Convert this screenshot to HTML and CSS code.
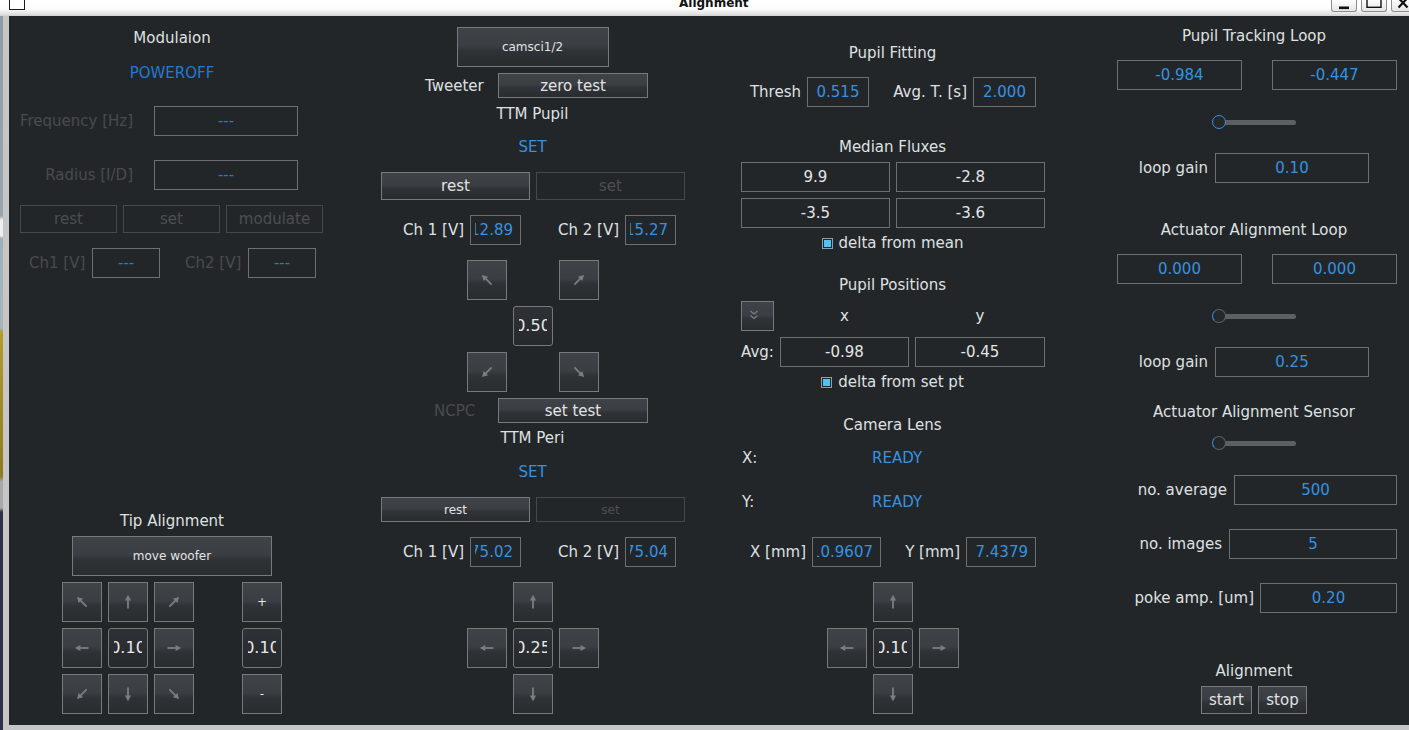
FILE: index.html
```html
<!DOCTYPE html>
<html>
<head>
<meta charset="utf-8">
<title>Alignment</title>
<link rel="stylesheet" href="styles.css">
</head>
<body>
<svg class="defs" aria-hidden="true">
  <defs>
    <g id="arr">
      <path d="M20 26.5V17.5" stroke="#7b7e81" stroke-width="1.8" fill="none"/>
      <path d="M16.9 18.4L20 12.8L23.1 18.4Z" fill="#7b7e81"/>
    </g>
  </defs>
</svg>

<div class="titlebar">
  <div class="tb-left"><div class="winicon"></div></div>
  <div class="tb-title">Alignment</div>
  <div class="tb-btns">
    <div class="wbtn"><svg viewBox="0 0 24 11"><rect x="7" y="6.5" width="10" height="2.6" fill="#111"/></svg></div>
    <div class="wbtn"><svg viewBox="0 0 24 11"><rect x="5" y="-3" width="14" height="10.3" fill="none" stroke="#111" stroke-width="1.4"/></svg></div>
    <div class="wbtn"><svg viewBox="0 0 24 11"><path d="M6.5 -2L15.5 7.5M15.5 -2L6.5 7.5" stroke="#111" stroke-width="2.2"/></svg></div>
  </div>
</div>

<div class="main">
  <div class="desk"></div>
  <div class="frame"></div>
  <div class="content">

    <!-- Column 1 -->
    <div class="col c1">
      <div class="ttl mt12">Modulaion</div>
      <div class="ttl pwr mt17">POWEROFF</div>
      <div class="row mt25">
        <span class="lbl dis lr w124">Frequency [Hz]</span>
        <span class="inp dimv w144 ml21">---</span>
      </div>
      <div class="row mt24">
        <span class="lbl dis lr w124">Radius [I/D]</span>
        <span class="inp dimv w144 ml21">---</span>
      </div>
      <div class="row h28 mt15 pl11 gap6">
        <span class="btn off w97 h28">rest</span>
        <span class="btn off w97 h28">set</span>
        <span class="btn off w97 h28">modulate</span>
      </div>
      <div class="row mt15 pl20">
        <span class="lbl dis lr w56">Ch1 [V]</span>
        <span class="inp dimv w68 ml7">---</span>
        <span class="lbl dis lr w56 ml25">Ch2 [V]</span>
        <span class="inp dimv w68 ml7">---</span>
      </div>

      <div class="ttl mt233">Tip Alignment</div>
      <div class="btn sm woofer mt7">move woofer</div>
      <div class="tip mt6">
        <div class="pad">
          <span class="btn sq"><svg viewBox="1 1 38 38"><use href="#arr" transform="rotate(-45 20 20)"/></svg></span>
          <span class="btn sq"><svg viewBox="1 1 38 38"><use href="#arr"/></svg></span>
          <span class="btn sq"><svg viewBox="1 1 38 38"><use href="#arr" transform="rotate(45 20 20)"/></svg></span>
          <span class="btn sq"><svg viewBox="1 1 38 38"><use href="#arr" transform="rotate(-90 20 20)"/></svg></span>
          <span class="spin"><span class="clipc"><span>0.10</span></span></span>
          <span class="btn sq"><svg viewBox="1 1 38 38"><use href="#arr" transform="rotate(90 20 20)"/></svg></span>
          <span class="btn sq"><svg viewBox="1 1 38 38"><use href="#arr" transform="rotate(-135 20 20)"/></svg></span>
          <span class="btn sq"><svg viewBox="1 1 38 38"><use href="#arr" transform="rotate(180 20 20)"/></svg></span>
          <span class="btn sq"><svg viewBox="1 1 38 38"><use href="#arr" transform="rotate(135 20 20)"/></svg></span>
        </div>
        <div class="pad1">
          <span class="btn sq sm">+</span>
          <span class="spin"><span class="clipc"><span>0.10</span></span></span>
          <span class="btn sq sm">-</span>
        </div>
      </div>
    </div>

    <!-- Column 2 -->
    <div class="col c2">
      <div class="btn sm camsci mt11">camsci1/2</div>
      <div class="row h25 mt6 pl90">
        <span class="lbl w73">Tweeter</span>
        <span class="btn w150 h25">zero test</span>
      </div>
      <div class="ttl mt6">TTM Pupil</div>
      <div class="ttl blue mt15">SET</div>
      <div class="row h28 mt17 pl46 gap6">
        <span class="btn w149 h28">rest</span>
        <span class="btn off w149 h28">set</span>
      </div>
      <div class="row mt15 pl68">
        <span class="lbl lr w60">Ch 1 [V]</span>
        <span class="inp rt w51 ml7"><span class="clipr"><span>12.89</span></span></span>
        <span class="lbl lr w60 ml37">Ch 2 [V]</span>
        <span class="inp rt w51 ml7"><span class="clipr"><span>15.27</span></span></span>
      </div>
      <div class="pad mt15 pl132">
        <span class="btn sq"><svg viewBox="1 1 38 38"><use href="#arr" transform="rotate(-45 20 20)"/></svg></span>
        <span></span>
        <span class="btn sq"><svg viewBox="1 1 38 38"><use href="#arr" transform="rotate(45 20 20)"/></svg></span>
        <span></span>
        <span class="spin"><span class="clipc"><span>0.50</span></span></span>
        <span></span>
        <span class="btn sq"><svg viewBox="1 1 38 38"><use href="#arr" transform="rotate(-135 20 20)"/></svg></span>
        <span></span>
        <span class="btn sq"><svg viewBox="1 1 38 38"><use href="#arr" transform="rotate(135 20 20)"/></svg></span>
      </div>
      <div class="row h25 mt6 pl99">
        <span class="lbl dis w64">NCPC</span>
        <span class="btn w150 h25">set test</span>
      </div>
      <div class="ttl mt5">TTM Peri</div>
      <div class="ttl blue mt16">SET</div>
      <div class="row h25 mt17 pl46 gap6">
        <span class="btn sm w149 h25">rest</span>
        <span class="btn sm off w149 h25">set</span>
      </div>
      <div class="row mt15 pl68">
        <span class="lbl lr w60">Ch 1 [V]</span>
        <span class="inp rt w51 ml7"><span class="clipr"><span>75.02</span></span></span>
        <span class="lbl lr w60 ml37">Ch 2 [V]</span>
        <span class="inp rt w51 ml7"><span class="clipr"><span>75.04</span></span></span>
      </div>
      <div class="pad mt15 pl132">
        <span></span>
        <span class="btn sq"><svg viewBox="1 1 38 38"><use href="#arr"/></svg></span>
        <span></span>
        <span class="btn sq"><svg viewBox="1 1 38 38"><use href="#arr" transform="rotate(-90 20 20)"/></svg></span>
        <span class="spin"><span class="clipc"><span>0.25</span></span></span>
        <span class="btn sq"><svg viewBox="1 1 38 38"><use href="#arr" transform="rotate(90 20 20)"/></svg></span>
        <span></span>
        <span class="btn sq"><svg viewBox="1 1 38 38"><use href="#arr" transform="rotate(180 20 20)"/></svg></span>
        <span></span>
      </div>
    </div>

    <!-- Column 3 -->
    <div class="col c3">
      <div class="ttl mt27">Pupil Fitting</div>
      <div class="row mt16 pl19">
        <span class="lbl lr w52">Thresh</span>
        <span class="inp w62 ml6">0.515</span>
        <span class="lbl lr w77 ml21">Avg. T. [s]</span>
        <span class="inp w63 ml6">2.000</span>
      </div>
      <div class="ttl mt30">Median Fluxes</div>
      <div class="flux mt7">
        <span class="inp wht">9.9</span>
        <span class="inp wht">-2.8</span>
        <span class="inp wht">-3.5</span>
        <span class="inp wht">-3.6</span>
      </div>
      <div class="cbrow mt6"><span class="cb"></span><span class="lbl">delta from mean</span></div>
      <div class="ttl mt23">Pupil Positions</div>
      <div class="pgrid mt8">
        <span class="btn chev"><svg viewBox="0 0 31 28"><path d="M8.5 9L12 12L15.5 9M8.5 13.5L12 16.5L15.5 13.5" fill="none" stroke="#7d8084" stroke-width="1.2"/></svg></span>
        <span class="lbl tc">x</span>
        <span class="lbl tc">y</span>
      </div>
      <div class="pgrid mt6">
        <span class="lbl">Avg:</span>
        <span class="inp wht">-0.98</span>
        <span class="inp wht">-0.45</span>
      </div>
      <div class="cbrow mt6"><span class="cb"></span><span class="lbl">delta from set pt</span></div>
      <div class="ttl mt24">Camera Lens</div>
      <div class="row h18 mt16 pl12"><span class="lbl w130">X:</span><span class="lbl blue">READY</span></div>
      <div class="row h18 mt26 pl12"><span class="lbl w130">Y:</span><span class="lbl blue">READY</span></div>
      <div class="row mt26 pl19">
        <span class="lbl lr w57">X [mm]</span>
        <span class="inp rt w69 ml6"><span class="clipr"><span>10.9607</span></span></span>
        <span class="lbl lr w56 ml23">Y [mm]</span>
        <span class="inp rt w70 ml6"><span class="clipr"><span>7.4379</span></span></span>
      </div>
      <div class="pad mt15 pl97">
        <span></span>
        <span class="btn sq"><svg viewBox="1 1 38 38"><use href="#arr"/></svg></span>
        <span></span>
        <span class="btn sq"><svg viewBox="1 1 38 38"><use href="#arr" transform="rotate(-90 20 20)"/></svg></span>
        <span class="spin"><span class="clipc"><span>0.10</span></span></span>
        <span class="btn sq"><svg viewBox="1 1 38 38"><use href="#arr" transform="rotate(90 20 20)"/></svg></span>
        <span></span>
        <span class="btn sq"><svg viewBox="1 1 38 38"><use href="#arr" transform="rotate(180 20 20)"/></svg></span>
        <span></span>
      </div>
    </div>

    <!-- Column 4 -->
    <div class="col c4">
      <div class="ttl mt10">Pupil Tracking Loop</div>
      <div class="row mt16 pl62">
        <span class="inp w125">-0.984</span>
        <span class="inp w125 ml30">-0.447</span>
      </div>
      <div class="slider mt25"><span class="knob on"></span><span class="track"></span></div>
      <div class="row mt24 pl82">
        <span class="lbl lr w71">loop gain</span>
        <span class="inp w154 ml7">0.10</span>
      </div>
      <div class="ttl mt37">Actuator Alignment Loop</div>
      <div class="row mt16 pl62">
        <span class="inp w125">0.000</span>
        <span class="inp w125 ml30">0.000</span>
      </div>
      <div class="slider mt25"><span class="knob"></span><span class="track"></span></div>
      <div class="row mt24 pl82">
        <span class="lbl lr w71">loop gain</span>
        <span class="inp w154 ml7">0.25</span>
      </div>
      <div class="ttl mt25">Actuator Alignment Sensor</div>
      <div class="slider mt16"><span class="knob"></span><span class="track"></span></div>
      <div class="row re mt25">
        <span class="lbl">no. average</span>
        <span class="inp w163 ml7">500</span>
      </div>
      <div class="row re mt24">
        <span class="lbl">no. images</span>
        <span class="inp w168 ml7">5</span>
      </div>
      <div class="row re mt24">
        <span class="lbl">poke amp. [um]</span>
        <span class="inp w137 ml6">0.20</span>
      </div>
      <div class="ttl mt48">Alignment</div>
      <div class="row h28 mt7 center gap6">
        <span class="btn w51 h28">start</span>
        <span class="btn w49 h28">stop</span>
      </div>
    </div>

  </div>
</div>
<div class="bottom"><div class="desk2"></div><div class="bframe"></div></div>
</body>
</html>
```

FILE: styles.css
```css
* { box-sizing: border-box; }
html, body { margin: 0; padding: 0; }
body {
  width: 1409px;
  height: 730px;
  overflow: hidden;
  background: #c6c6c6;
  font-family: "DejaVu Sans", "Liberation Sans", sans-serif;
  font-size: 15px;
  color: #dfe0e1;
}
.defs { display: block; width: 0; height: 0; overflow: hidden; }

/* title bar */
.titlebar {
  height: 16px;
  display: grid;
  grid-template-columns: 679px 652px 90px;
  background: linear-gradient(#ffffff 0%, #fcfcfc 55%, #e4e4e4 85%, #d0d0d0 100%);
  overflow: hidden;
}
.winicon {
  width: 16px;
  height: 10px;
  margin-left: 9px;
  border: 1px solid #1d1d1d;
  border-top: 0;
  background: #fff;
}
.tb-title {
  font-weight: bold;
  font-size: 12px;
  line-height: 12px;
  margin-top: -3px;
  color: #111;
  white-space: nowrap;
}
.tb-btns { display: flex; gap: 4px; }
.wbtn {
  width: 26px;
  height: 12px;
  flex-shrink: 0;
  border: 1px solid #8d8d8d;
  border-top: 0;
  border-radius: 0 0 3px 3px;
  background: linear-gradient(#fdfdfd, #e6e6e6);
}
.wbtn svg { display: block; width: 24px; height: 11px; }

/* window frame */
.main { display: flex; height: 709px; }
.desk {
  width: 3px;
  flex-shrink: 0;
  background: linear-gradient(to bottom, #8f9ba6 0px, #9aa5ae 200px, #eeeeee 204px, #eeeeee 220px,
    #9fb0bb 222px, #a7b5bd 312px, #b59c2c 316px, #8d7a22 460px, #a9a9a9 466px, #a9a9a9 492px,
    #2f3149 496px, #2f3149 709px);
}
.frame { width: 6px; flex-shrink: 0; background: #c6c6c6; }
.content {
  width: 1400px;
  flex-shrink: 0;
  display: flex;
  background: #232629;
  overflow: hidden;
}
.bottom { display: flex; height: 5px; }
.desk2 { width: 3px; background: #2f3149; }
.bframe { flex: 1; background: #c6c6c6; }

/* columns */
.col { flex-shrink: 0; display: flex; flex-direction: column; }
.c1 { width: 326px; }
.c2 { width: 395px; }
.c3 { width: 325px; }
.c4 { width: 398px; }

.ttl { height: 18px; line-height: 20px; text-align: center; white-space: nowrap; flex-shrink: 0; }
.blue { color: #3592e0; }
.pwr { color: #1f7bd6; }
.lbl { line-height: 18px; white-space: nowrap; flex-shrink: 0; }
.lr { text-align: right; direction: rtl; unicode-bidi: plaintext; }
.dis { color: #484b4f; }
.tc { text-align: center; }

.row { display: flex; align-items: center; height: 30px; flex-shrink: 0; }
.h18 { height: 18px; }
.h25 { height: 25px; }
.h28 { height: 28px; }
.center { justify-content: center; }
.re { justify-content: flex-end; padding-right: 56px; }
.gap6 { gap: 6px; }

/* inputs */
.inp {
  height: 30px;
  flex-shrink: 0;
  border: 1px solid #6c6f73;
  display: flex;
  align-items: center;
  justify-content: center;
  color: #3592e0;
  overflow: hidden;
  white-space: nowrap;
  line-height: 18px;
}
.inp.wht { color: #e4e5e6; }
.inp.dimv { color: #2279cf; }
.inp.rt { justify-content: flex-end; padding: 0 7px 0 4px; }
.clipr { flex: 1; overflow: hidden; display: flex; justify-content: flex-end; }
.clipr span, .clipc span { flex-shrink: 0; white-space: nowrap; }

/* buttons */
.btn {
  flex-shrink: 0;
  border: 1px solid #76797d;
  background: linear-gradient(#3f4246 0%, #3b3e42 46%, #2f3236 60%, #292c2f 100%);
  display: flex;
  align-items: center;
  justify-content: center;
  color: #e2e3e4;
  white-space: nowrap;
  line-height: 18px;
}
.btn.off { background: none; border-color: #45484c; color: #4b4e52; }
.sm { font-size: 12px; }
.sq { width: 40px; height: 40px; }
.sq svg { display: block; width: 38px; height: 38px; }
.camsci { width: 152px; height: 40px; align-self: center; }
.woofer { width: 200px; height: 40px; align-self: flex-start; margin-left: 63px; }
.chev { width: 33px; height: 30px; }
.chev svg { display: block; width: 31px; height: 28px; }

.spin {
  width: 40px;
  height: 40px;
  border: 1px solid #75787c;
  border-radius: 3px;
  background: linear-gradient(#2e3135, #26292c);
  display: flex;
  align-items: center;
  justify-content: center;
  color: #e8e9ea;
  font-size: 16px;
  line-height: 18px;
}
.clipc { width: 28px; overflow: hidden; display: flex; justify-content: center; }

/* pads */
.pad {
  display: grid;
  grid-template-columns: repeat(3, 40px);
  grid-auto-rows: 40px;
  gap: 6px;
  flex-shrink: 0;
}
.pad1 {
  display: grid;
  grid-template-columns: 40px;
  grid-auto-rows: 40px;
  gap: 6px;
}
.tip { display: flex; padding-left: 53px; gap: 48px; flex-shrink: 0; }

.flux {
  display: grid;
  grid-template-columns: 149px 149px;
  grid-auto-rows: 30px;
  gap: 6px;
  padding-left: 11px;
  flex-shrink: 0;
}
.pgrid {
  display: grid;
  grid-template-columns: 33px 129px 130px;
  column-gap: 6px;
  height: 30px;
  align-items: center;
  padding-left: 11px;
  flex-shrink: 0;
}
.cbrow {
  display: flex;
  align-items: center;
  justify-content: center;
  gap: 6px;
  height: 18px;
  flex-shrink: 0;
}
.cb {
  width: 11px;
  height: 11px;
  border: 1px solid #86a2b4;
  padding: 1px;
  background: #4fc3f3;
  background-clip: content-box;
}

/* sliders */
.slider {
  display: flex;
  align-items: center;
  height: 14px;
  padding-left: 157px;
  flex-shrink: 0;
}
.knob {
  width: 14px;
  height: 14px;
  flex-shrink: 0;
  border-radius: 50%;
  border: 1.5px solid #5c5f63;
  border-left-color: #3a8ee0;
  background: #25282b;
  z-index: 1;
}
.knob.on { border-color: #3a8ee0; }
.track {
  width: 77px;
  height: 5px;
  margin-left: -7px;
  border-radius: 3px;
  background: #5c5f63;
}

/* widths */
.w51 { width: 51px; } .w49 { width: 49px; } .w52 { width: 52px; }
.w56 { width: 56px; } .w57 { width: 57px; } .w60 { width: 60px; }
.w62 { width: 62px; } .w63 { width: 63px; } .w64 { width: 64px; }
.w68 { width: 68px; } .w69 { width: 69px; } .w70 { width: 70px; }
.w71 { width: 71px; } .w73 { width: 73px; } .w77 { width: 77px; }
.w97 { width: 97px; } .w124 { width: 124px; }
.w125 { width: 125px; } .w130 { width: 130px; } .w137 { width: 137px; }
.w144 { width: 144px; } .w149 { width: 149px; } .w150 { width: 150px; }
.w154 { width: 154px; } .w163 { width: 163px; } .w168 { width: 168px; }

/* spacing */
.ml6 { margin-left: 6px; } .ml7 { margin-left: 7px; }
.ml21 { margin-left: 21px; } .ml23 { margin-left: 23px; }
.ml25 { margin-left: 25px; } .ml30 { margin-left: 30px; } .ml37 { margin-left: 37px; }
.pl11 { padding-left: 11px; } .pl12 { padding-left: 12px; } .pl19 { padding-left: 19px; }
.pl20 { padding-left: 20px; }
.pl46 { padding-left: 46px; } .pl62 { padding-left: 62px; } .pl68 { padding-left: 68px; }
.pl82 { padding-left: 82px; } .pl90 { padding-left: 90px; } .pl97 { padding-left: 97px; }
.pl99 { padding-left: 99px; } .pl132 { padding-left: 132px; }
.mt5 { margin-top: 5px; } .mt6 { margin-top: 6px; } .mt7 { margin-top: 7px; }
.mt8 { margin-top: 8px; } .mt10 { margin-top: 10px; } .mt11 { margin-top: 11px; }
.mt12 { margin-top: 12px; } .mt15 { margin-top: 15px; } .mt16 { margin-top: 16px; }
.mt17 { margin-top: 17px; } .mt23 { margin-top: 23px; } .mt24 { margin-top: 24px; }
.mt25 { margin-top: 25px; } .mt26 { margin-top: 26px; } .mt27 { margin-top: 27px; }
.mt30 { margin-top: 30px; } .mt37 { margin-top: 37px; } .mt48 { margin-top: 48px; }
.mt233 { margin-top: 233px; }
```
